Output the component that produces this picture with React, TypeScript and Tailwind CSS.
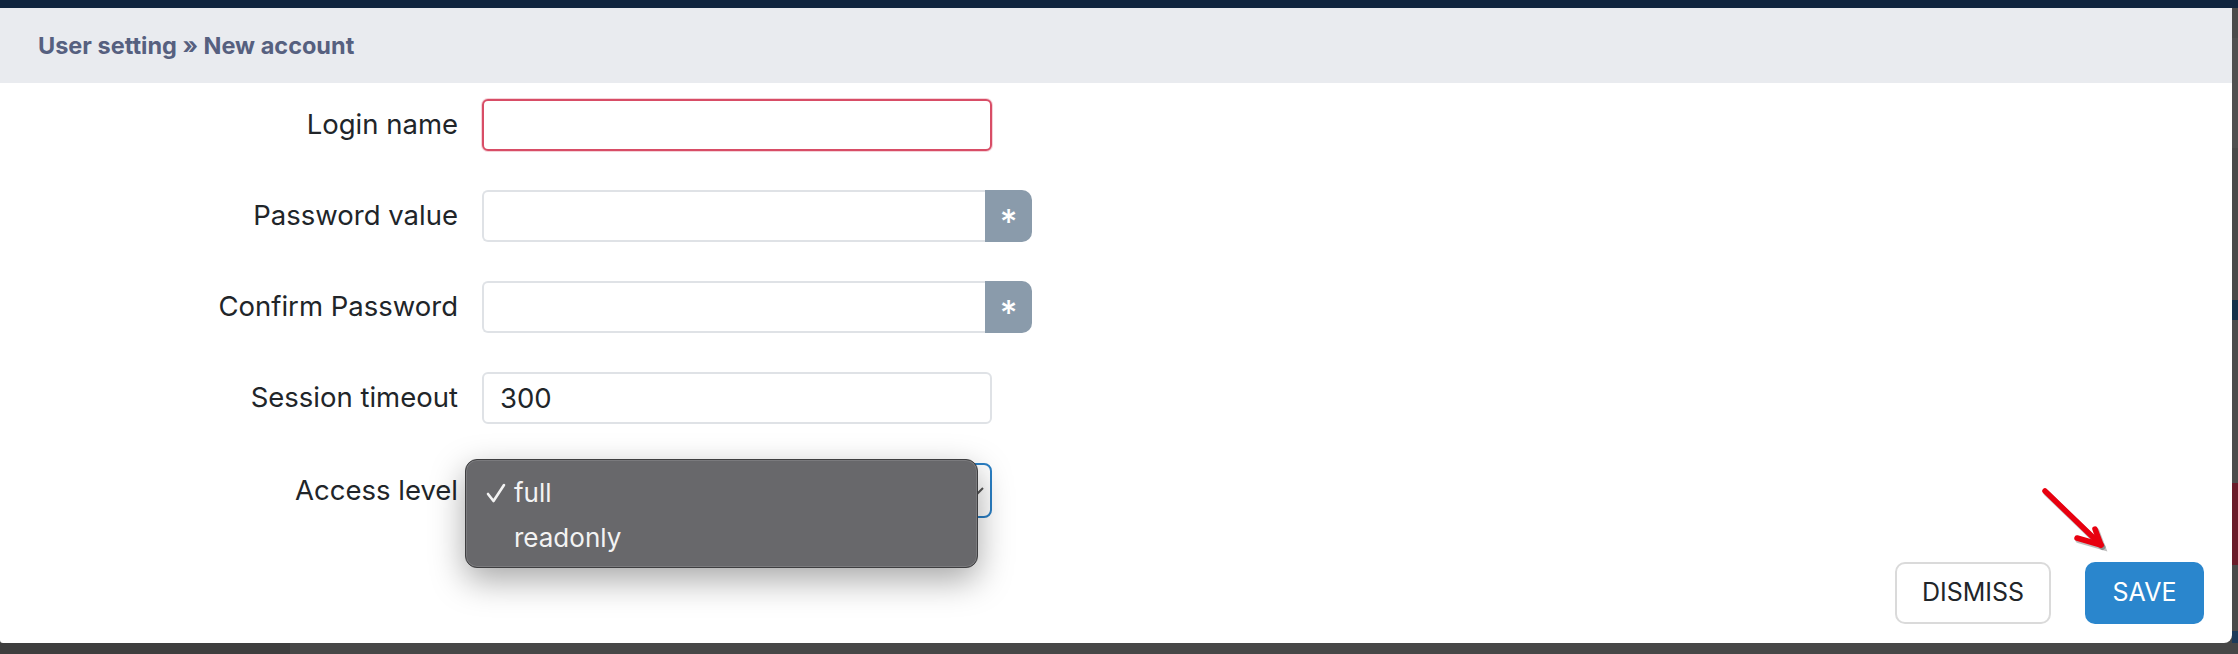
import React from "react";

function PasswordField() {
  return (
    <div className="flex w-[550px] h-[52px]">
      <input
        type="password"
        className="w-[503px] h-full border-2 border-r-0 border-[#dfe2e6] rounded-l-[6px] bg-white outline-none"
      />
      <div className="w-[47px] h-full bg-[#8a9bab] rounded-r-[10px] flex items-center justify-center text-white text-[34px] font-medium leading-none pt-[12px]">
        *
      </div>
    </div>
  );
}

function Row({ label, children }: { label: string; children: React.ReactNode }) {
  return (
    <div className="flex items-center h-[52px]">
      <div className="w-[458px] text-right text-[27.5px] text-[#212529] leading-none">{label}</div>
      <div className="ml-[24px]">{children}</div>
    </div>
  );
}

export default function App() {
  return (
    <div className="relative w-[2238px] h-[654px] overflow-hidden bg-[#474747] font-['Inter','Liberation_Sans',sans-serif]">
      <div className="h-[8px] bg-[#10253f]" />
      <div className="flex h-[635px]">
        <div className="w-[2232px] h-[635px] bg-white rounded-br-[8px] rounded-bl-[3px] flex flex-col relative">
          <div className="h-[75px] bg-[#e9ebef] flex items-center pl-[38px]">
            <span className="text-[23.5px] font-bold text-[#56607f]">
              User setting » New account
            </span>
          </div>
          <div className="flex-1 flex flex-col relative">
            <div className="flex flex-col gap-[39px] pt-[16px]">
              <Row label="Login name">
                <input
                  type="text"
                  className="w-[510px] h-[52px] border-2 border-[#d84d66] rounded-[6px] bg-white outline-none shadow-[0_0_0_1px_rgba(216,77,102,0.25)]"
                />
              </Row>
              <Row label="Password value">
                <PasswordField />
              </Row>
              <Row label="Confirm Password">
                <PasswordField />
              </Row>
              <Row label="Session timeout">
                <input
                  type="text"
                  defaultValue="300"
                  className="w-[510px] h-[52px] border-2 border-[#dfe2e6] rounded-[6px] bg-white outline-none pl-[16px] text-[27.5px] text-[#212529]"
                />
              </Row>
              <div className="flex items-center h-[55px]">
                <div className="w-[458px] text-right text-[27.5px] text-[#212529] leading-none">Access level</div>
                <div className="ml-[24px] w-[510px] h-[55px] border-2 border-[#2a7fc4] rounded-[8px] bg-white flex items-center justify-end pr-[6px]">
                  <svg width="12" height="10" viewBox="0 0 12 10">
                    <path d="M1 2 L6 7 L11 2" stroke="#555" strokeWidth="2" fill="none" />
                  </svg>
                </div>
              </div>
            </div>
            <div className="flex-1" />
            <div className="flex justify-end gap-[34px] pr-[28px] pb-[19px]">
              <button className="w-[156px] h-[62px] border-2 border-[#dadada] rounded-[10px] bg-white text-[25px] text-[#212529]">
                DISMISS
              </button>
              <button className="w-[119px] h-[62px] rounded-[10px] bg-[#2a86cd] text-[25px] text-white">
                SAVE
              </button>
            </div>

            {/* open select menu */}
            <div className="absolute left-[465px] top-[376px] w-[513px] h-[109px] rounded-[12px] bg-[#68686b] border border-[#3e3e40] shadow-[0_12px_34px_rgba(0,0,0,0.35),inset_0_0_0_1px_rgba(255,255,255,0.12)] pt-[10px] text-[26px] text-[#f3f3f3]">
              <div className="h-[45px] flex items-center">
                <svg className="ml-[20px] mr-[8px]" width="20" height="20" viewBox="0 0 20 20">
                  <path d="M2 11 L7.5 18 L18 2" stroke="#f3f3f3" strokeWidth="2.6" fill="none" strokeLinecap="round" strokeLinejoin="round" />
                </svg>
                <span>full</span>
              </div>
              <div className="h-[45px] flex items-center pl-[48px]">
                <span>readonly</span>
              </div>
            </div>
          </div>

          {/* annotation arrow */}
          <svg className="absolute left-[2030px] top-[472px]" width="90" height="80" viewBox="0 0 90 80">
            <g stroke="rgba(0,0,0,0.25)" strokeWidth="6" strokeLinecap="round" fill="none" transform="translate(1.5,2)">
              <path d="M15 11 L71 65" />
              <path d="M65 49 L71 65 L47 58" />
            </g>
            <g stroke="#e8000f" strokeWidth="5.5" strokeLinecap="round" strokeLinejoin="round" fill="none">
              <path d="M15 11 L71 65" />
              <path d="M65 49 L71 65 L47 58" />
            </g>
          </svg>
        </div>
        <div className="w-[6px] flex flex-col">
          <div className="h-[30px] bg-[#4b4b4b]" />
          <div className="h-[110px] bg-[#505050]" />
          <div className="h-[152px] bg-[#4a4a4a]" />
          <div className="h-[20px] bg-[#16304a]" />
          <div className="h-[163px] bg-[#4c4c4c]" />
          <div className="h-[82px] bg-[#6b1c2a]" />
          <div className="h-[66px] bg-[#4a4a4a]" />
          <div className="h-[12px] bg-[#1d3a5a]" />
        </div>
      </div>
      <div className="flex h-[11px]">
        <div className="w-[290px] bg-[#3e3e3e]" />
        <div className="flex-1 bg-[#474747]" />
      </div>
    </div>
  );
}
